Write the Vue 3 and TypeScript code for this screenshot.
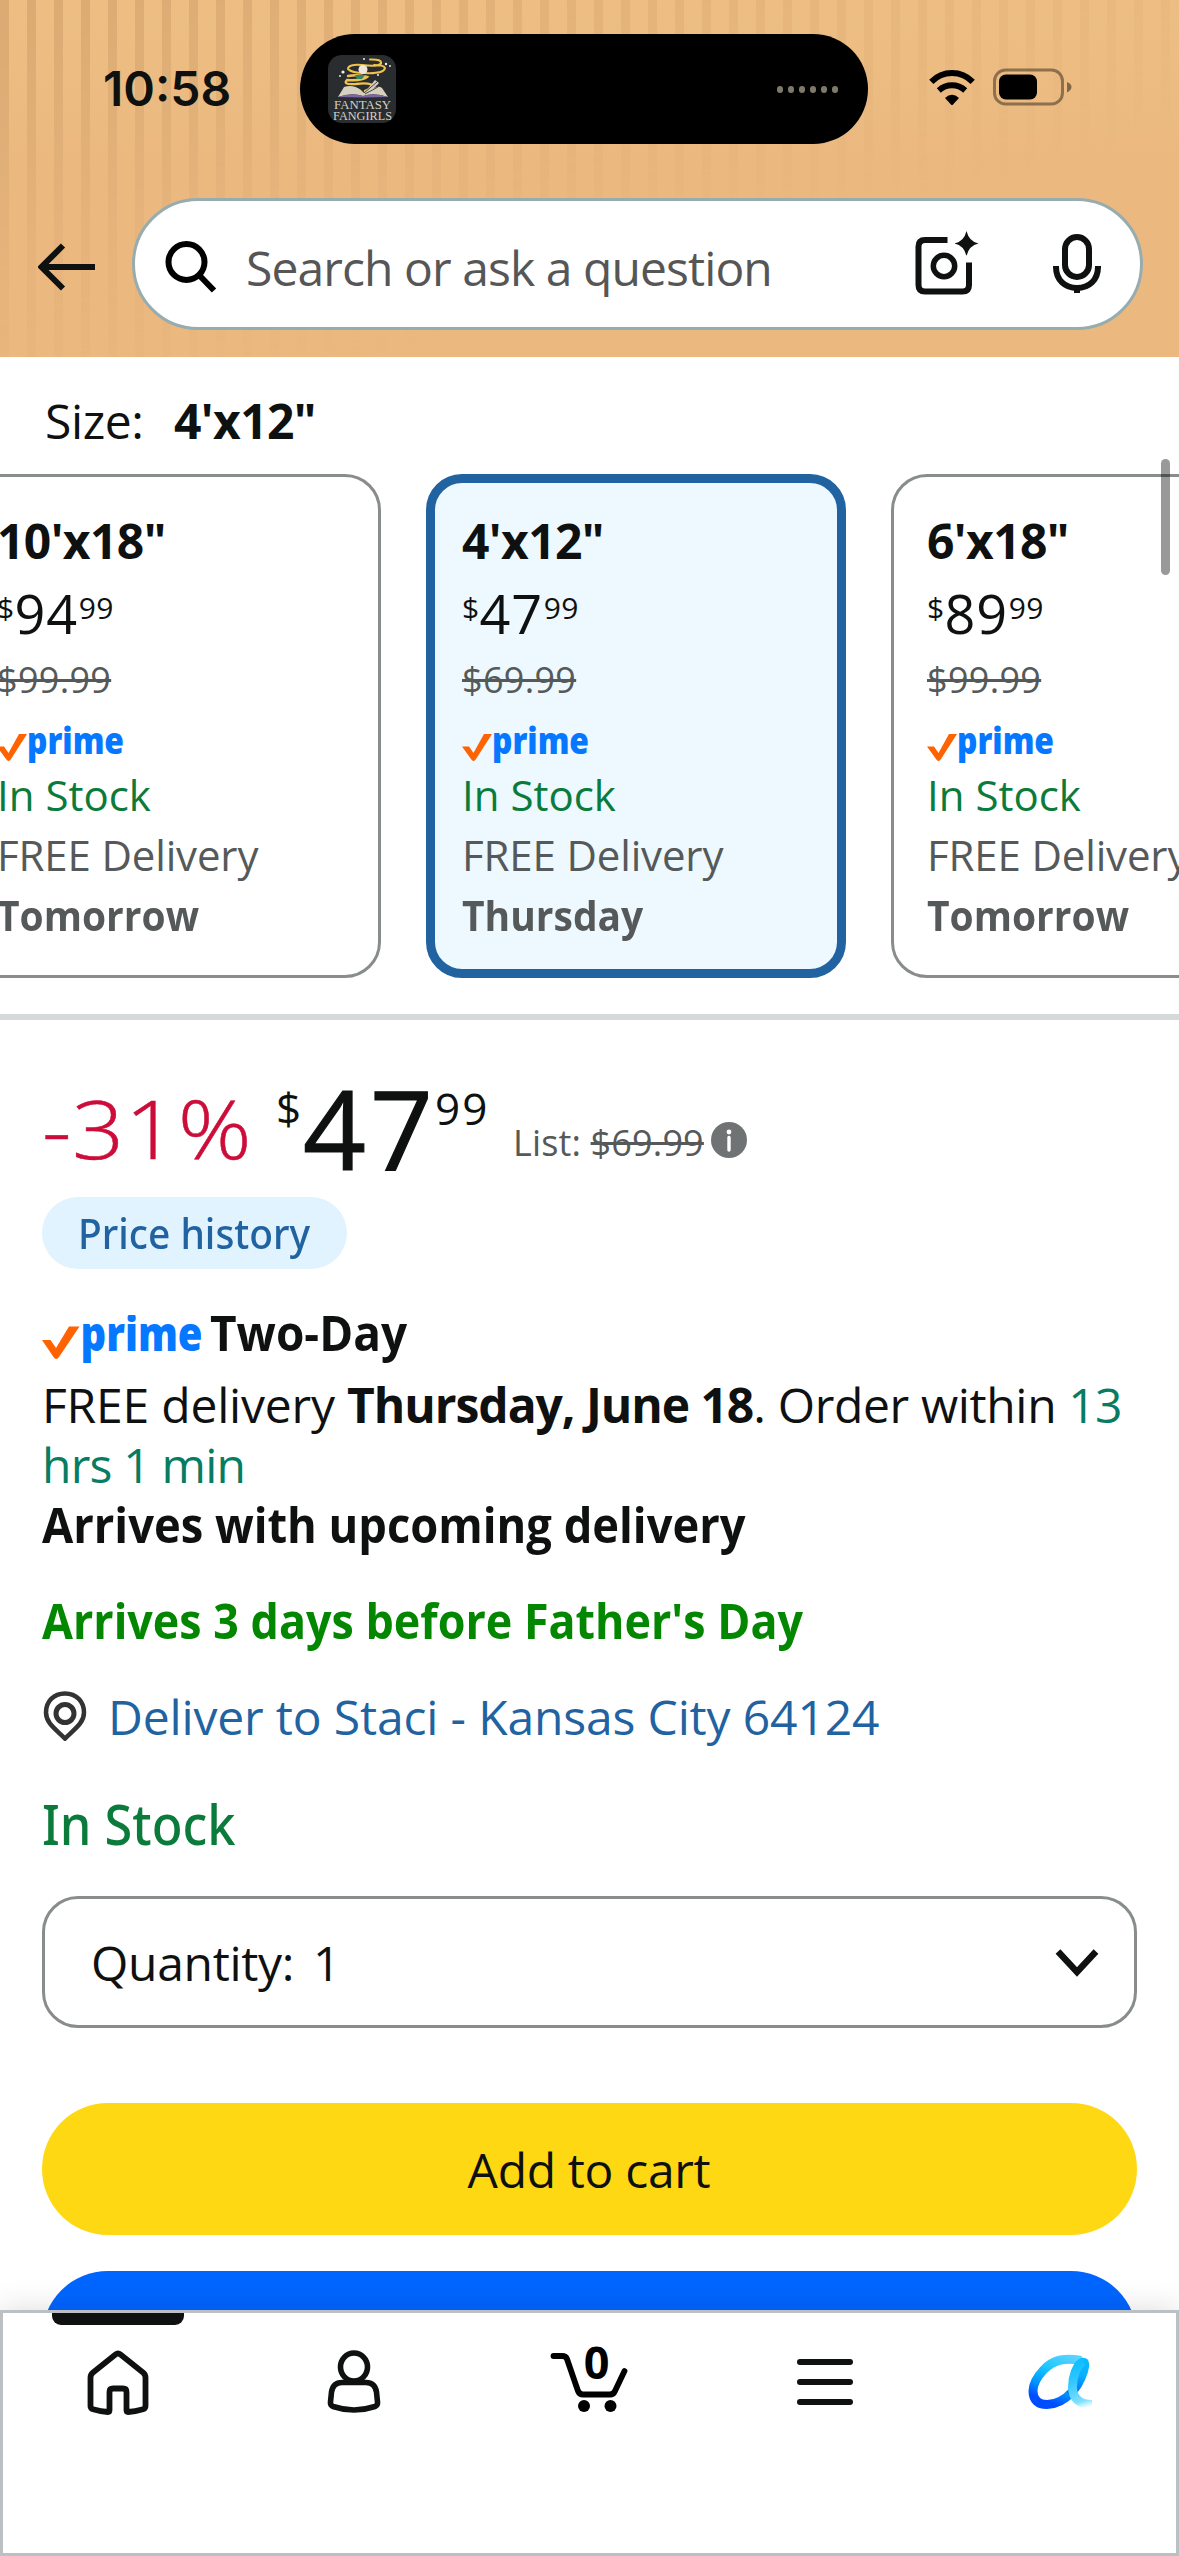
<script setup lang="ts">
interface SizeOption {
  name: string
  dollars: string
  list: string
  day: string
  selected: boolean
}

const options: SizeOption[] = [
  { name: '10\'x18"', dollars: '94', list: '$99.99', day: 'Tomorrow', selected: false },
  { name: '4\'x12"', dollars: '47', list: '$69.99', day: 'Thursday', selected: true },
  { name: '6\'x18"', dollars: '89', list: '$99.99', day: 'Tomorrow', selected: false },
]

const islandDots = [0, 1, 2, 3, 4, 5]
</script>

<template>
  <main class="page">
    <header class="header">
      <div class="stripes"></div>
      <div class="status">
        <span class="clock">10:58</span>
        <div class="island">
          <svg class="artwork" width="68" height="68" viewBox="0 0 68 68">
            <rect width="68" height="68" rx="14" fill="#2a2d2f" />
            <g fill="none" stroke="#efc24e" stroke-linecap="round">
              <path d="M42 4.500Q54 4 53 8.500Q50 12 34 10Q20 9 20 14Q24 18 36 18Q56 19 57 13Q56 10 46 10" stroke-width="2" />
              <path d="M20 21Q30 19 39 22Q34 26 19 25Q14 30 28 29Q42 27 45 31Q42 35 37 36" stroke-width="2.400" />
            </g>
            <circle cx="35" cy="14.500" r="4.500" fill="#efe6dc" />
            <path d="M27 20h10l-3 4h-5z" fill="#2f8a67" />
            <path d="M10 42L16 32Q25 29 33 35L36 38L47 25L51 28L45 34Q50 30 54 33L60 42Q46 37 35 41Q24 37 10 42Z" fill="#d8d0bf" />
            <path d="M36 38L49 27M37 39L50 32" stroke="#4a4740" stroke-width="1" />
            <path d="M10 42Q24 37 35 41Q46 37 60 42L35 42.500Z" fill="#7d65a8" />
            <g fill="#f1f1ee">
              <circle cx="15" cy="17" r="1.600" /><circle cx="58" cy="9" r="1.200" />
              <circle cx="36" cy="4" r="1" /><circle cx="12" cy="21" r=".9" />
              <circle cx="50" cy="20" r="1" /><circle cx="62" cy="11" r=".9" />
            </g>
            <text x="6" y="54" textLength="57" lengthAdjust="spacingAndGlyphs" class="art-text">FANTASY</text>
            <text x="5" y="65" textLength="59" lengthAdjust="spacingAndGlyphs" class="art-text">FANGIRLS</text>
          </svg>
          <div class="dots"><i v-for="d in islandDots" :key="d"></i></div>
        </div>
        <svg class="wifi" width="48" height="36" viewBox="0 0 48 36">
          <path d="M3.300 11.800Q12 3 24 3T44.700 11.800" fill="none" stroke="#000" stroke-width="6" />
          <path d="M10.800 20.500Q16.500 15.300 24 15.300T37.200 20.500" fill="none" stroke="#000" stroke-width="6" />
          <path d="M17 28Q24 21.500 31 28L24.800 34.700Q24 35.400 23.200 34.700Z" />
        </svg>
        <svg class="battery" width="79" height="38" viewBox="0 0 79 38">
          <rect x="1.500" y="2" width="68" height="34" rx="11" fill="none" stroke="#000" stroke-opacity=".4" stroke-width="3" />
          <rect x="6" y="6.500" width="38" height="25" rx="7" />
          <path d="M74 14Q78.500 16 78.500 19T74 24.500Z" fill-opacity=".45" />
        </svg>
      </div>
      <div class="search-row">
        <svg class="back" width="57" height="48" viewBox="0 0 57 48">
          <path d="M57 24H4M25 2.500L3.500 24L25 45.500" fill="none" stroke="#0f1111" stroke-width="6" />
        </svg>
        <div class="search">
          <svg class="glass" width="54" height="54" viewBox="0 0 54 54">
            <circle cx="22.500" cy="23" r="18" fill="none" stroke="#000" stroke-width="6" />
            <path d="M35.500 36.500L50 51.500" stroke="#000" stroke-width="6" />
          </svg>
          <span class="placeholder">Search or ask a question</span>
          <svg class="camera" width="64" height="64" viewBox="0 0 64 64">
            <path d="M32.500 9H10Q3.500 9 3.500 15.500V54Q3.500 60.500 10 60.500H47.500Q54 60.500 54 54V31.500" fill="none" stroke="#0f1111" stroke-width="6" />
            <circle cx="29" cy="35" r="10.700" fill="none" stroke="#0f1111" stroke-width="5.500" />
            <path d="M51.500 0Q54 10.500 63.500 12.500Q54 14.500 51.500 25Q49 14.500 39.500 12.500Q49 10.500 51.500 0Z" fill="#0f1111" />
          </svg>
          <svg class="mic" width="48" height="60" viewBox="0 0 48 60">
            <rect x="12" y="3" width="24" height="40" rx="12" fill="none" stroke="#0f1111" stroke-width="6" />
            <path d="M3 32V33C3 46 12 54 24 54S45 46 45 33V32M24 53V59" fill="none" stroke="#0f1111" stroke-width="6" />
          </svg>
        </div>
      </div>
    </header>

    <section class="sizes">
      <div class="size-label"><span>Size:</span><b>4'x12"</b></div>
      <div class="cards">
        <article v-for="o in options" :key="o.name" class="card" :class="{ selected: o.selected }">
          <b class="card-name">{{ o.name }}</b>
          <div class="card-price"><sup>$</sup><span>{{ o.dollars }}</span><sup>99</sup></div>
          <div class="card-list"><s>{{ o.list }}</s></div>
          <svg class="card-prime" width="130" height="40" viewBox="0 0 130 40">
            <path d="M0 22.500H7L11.500 29L22 10H30L14 35Q11.500 39 9 35Z" fill="#ff6200" />
            <text x="30" y="30" textLength="97" lengthAdjust="spacingAndGlyphs" class="prime-word">prime</text>
          </svg>
          <div class="card-stock">In Stock</div>
          <div class="card-ship">FREE Delivery</div>
          <b class="card-day">{{ o.day }}</b>
        </article>
      </div>
    </section>

    <section class="offer">
      <div class="price">
        <span class="percent">-31%</span>
        <span class="symbol">$</span>
        <span class="whole">47</span>
        <span class="cents">99</span>
        <span class="list">List: <s>$69.99</s></span>
        <svg class="info" width="36" height="36" viewBox="0 0 36 36">
          <circle cx="18" cy="18" r="18" fill="#6f7373" />
          <circle cx="18" cy="10" r="2.400" fill="#fff" />
          <path d="M18 15.500V28" stroke="#fff" stroke-width="3.400" stroke-linecap="round" />
        </svg>
      </div>
      <div class="history"><span>Price history</span></div>
      <div class="two-day">
        <svg width="162" height="50" viewBox="0 0 162 50">
          <path d="M0 25H8.500L14 33L27 11.500H37.500L17 42Q14 46 11.500 42Z" fill="#ff6200" />
          <text x="38.500" y="36" textLength="122" lengthAdjust="spacingAndGlyphs" class="prime-word big">prime</text>
        </svg>
        <b>Two-Day</b>
      </div>
      <p class="delivery"><span class="free">FREE delivery </span><b>Thursday, June 18</b>. Order within <span class="time">13<br />hrs 1 min</span></p>
      <b class="upcoming">Arrives with upcoming delivery</b>
      <b class="fathers">Arrives 3 days before Father's Day</b>
      <div class="deliver-to">
        <svg width="44" height="50" viewBox="0 0 44 50">
          <path d="M22 2.500C33.500 2.500 41 10.500 41 21.500C41 31.500 33 37 22 47.500C11 37 3 31.500 3 21.500C3 10.500 10.500 2.500 22 2.500Z" fill="none" stroke="#333" stroke-width="4.500" />
          <circle cx="22" cy="22.500" r="9" fill="none" stroke="#333" stroke-width="5" />
        </svg>
        <span>Deliver to Staci - Kansas City 64124</span>
      </div>
      <div class="stock">In Stock</div>
      <div class="quantity">
        <span class="q-label">Quantity:</span><span>1</span>
        <svg width="44" height="30" viewBox="0 0 44 30">
          <path d="M3 3.500L22 24L41 3.500" fill="none" stroke="#0f1111" stroke-width="6.500" />
        </svg>
      </div>
      <div class="button add"><span>Add to cart</span></div>
      <div class="button buy"></div>
    </section>

    <div class="scrollbar"></div>

    <nav class="tabs">
      <div class="tab active">
        <svg width="62" height="66" viewBox="0 0 62 66">
          <path d="M28.500 4.500Q31 2.500 33.500 4.500L56 22.500Q58.500 24.500 58.500 27.500V56Q58.500 58.500 56 59.200Q48 61.500 41 62Q39.500 62 39.500 60V42Q39.500 38.500 36 38.500H26Q22.500 38.500 22.500 42V60Q22.500 62 21 62Q14 61.500 6 59.200Q3.500 58.500 3.500 56V27.500Q3.500 24.500 6 22.500Z" fill="none" stroke="#0f1111" stroke-width="5.800" stroke-linejoin="round" />
        </svg>
      </div>
      <div class="tab">
        <svg width="62" height="66" viewBox="0 0 62 66">
          <ellipse cx="31" cy="17" rx="13.500" ry="14" fill="none" stroke="#0f1111" stroke-width="5.600" />
          <path d="M19 32.500H43Q52 32.500 53.500 42L54.500 52Q54.800 55 52 56.500Q31 63.500 10 56.500Q7.200 55 7.500 52L8.500 42Q10 32.500 19 32.500Z" fill="none" stroke="#0f1111" stroke-width="5.600" />
        </svg>
      </div>
      <div class="tab">
        <svg class="cart" width="80" height="76" viewBox="0 0 80 76">
          <path d="M4.500 10H13Q17 10 18 13L29 45Q30.500 48.500 34 48.500H61Q64.500 48.500 66 45L75.500 25" fill="none" stroke="#000" stroke-width="5.800" stroke-linecap="round" stroke-linejoin="round" />
          <circle cx="35" cy="60" r="6" /><circle cx="61.500" cy="60" r="6" />
          <text x="47.500" y="32.500" text-anchor="middle" class="cart-count">0</text>
        </svg>
      </div>
      <div class="tab">
        <svg width="56" height="66" viewBox="0 0 56 66">
          <path d="M3 12H53M3 32H53M3 52H53" stroke="#0f1111" stroke-width="6" stroke-linecap="round" />
        </svg>
      </div>
      <div class="tab">
        <svg width="70" height="66" viewBox="0 0 70 66">
          <defs>
            <linearGradient id="bowl" gradientUnits="userSpaceOnUse" x1="46" y1="6" x2="26" y2="58">
              <stop offset="0" stop-color="#5bd3ff" /><stop offset=".35" stop-color="#1cc8ff" />
              <stop offset=".65" stop-color="#0098ff" /><stop offset=".92" stop-color="#004cff" />
            </linearGradient>
            <linearGradient id="loop" gradientUnits="userSpaceOnUse" x1="58" y1="8" x2="46" y2="50">
              <stop offset="0" stop-color="#08bcff" /><stop offset=".4" stop-color="#08b0ff" /><stop offset="1" stop-color="#0052ff" />
            </linearGradient>
            <linearGradient id="tail" gradientUnits="userSpaceOnUse" x1="52" y1="8" x2="66" y2="56">
              <stop offset="0" stop-color="#08bcff" /><stop offset=".45" stop-color="#35c8ff" />
              <stop offset=".85" stop-color="#7fe0ff" /><stop offset="1" stop-color="#7fe0ff" stop-opacity="0" />
            </linearGradient>
          </defs>
          <path d="M55 10.500C40 7.500 28 9 17.500 20C10 28 7 34 7 41C7 50 12 54.500 21 54.500C30 54.500 39 49.500 46 42" fill="none" stroke="url(#bowl)" stroke-width="9" />
          <path d="M43.500 45C51 38 55 30 57.500 22C59.500 15 59.500 12 57 12" fill="none" stroke="url(#loop)" stroke-width="8.500" />
          <path d="M58 11.500C50 14 46.500 28 46.500 37C46.500 48 53 54.500 66 54.500" fill="none" stroke="url(#tail)" stroke-width="9" />
        </svg>
      </div>
    </nav>
  </main>
</template>

<style>
body { background: #fff; }
</style>

<style scoped>
.page { position: relative; width: 1179px; height: 2556px; overflow: hidden; background: #fff; color: #0f1111; font-family: 'Open Sans', 'Noto Sans', sans-serif; font-size: 48px; line-height: 60px; }
.page * { box-sizing: border-box; }
b { display: block; font-weight: 700; white-space: nowrap; transform-origin: 0 50%; }
svg { display: block; flex: none; }
s { text-decoration-thickness: 3px; }

.header { position: relative; height: 357px; background: linear-gradient(#edbe83, #ebb980 45%, #ebb980); }
.stripes { position: absolute; inset: 0; background: repeating-linear-gradient(90deg, #ce9d69 0 9px, transparent 9px 27px); opacity: .6; -webkit-mask-image: linear-gradient(164deg, #000 0%, rgba(0, 0, 0, .36) 36%, transparent 68%); mask-image: linear-gradient(164deg, #000 0%, rgba(0, 0, 0, .36) 36%, transparent 68%); }
.status { position: relative; display: flex; height: 198px; align-items: flex-start; }
.clock { width: 197px; margin: 59px 0 0 103px; font: 600 48px/60px Inter, sans-serif; white-space: nowrap; }
.island { display: flex; width: 568px; height: 110px; margin-top: 34px; padding: 0 30px 0 28px; align-items: center; justify-content: space-between; border-radius: 55px; background: #000; }
.art-text { font: 13px 'Liberation Serif', serif; fill: #d5d2c9; }
.dots { display: flex; gap: 5px; }
.dots i { width: 6px; height: 7px; border-radius: 3px; background: #7e796a; }
.wifi { margin: 70px 0 0 60px; }
.battery { margin: 68px 0 0 17px; }
.search-row { position: relative; display: flex; align-items: center; height: 132px; padding-left: 38px; }
.back { margin-top: 6px; }
.search { display: flex; align-items: center; width: 1011px; height: 132px; margin-left: 37px; border: 3px solid #97acaf; border-radius: 66px; background: #fff; }
.glass { margin: 3px 0 0 29px; }
.placeholder { margin: 8px 0 0 28px; width: 667px; font-size: 48px; letter-spacing: -.92px; color: #565656; white-space: nowrap; }
.camera { margin: -3px 0 0 2px; }
.mic { margin: 0 0 0 74px; }

.sizes { padding-top: 34px; height: 663px; border-bottom: 6px solid #d5d9d9; overflow: hidden; }
.size-label { display: flex; padding-left: 45px; height: 60px; }
.size-label span { width: 129px; letter-spacing: -.4px; }
.size-label b, .card-name { letter-spacing: -.6px; }
.cards { display: flex; gap: 45px; margin: 23px 0 0 -39px; }
.card { flex: none; width: 420px; height: 504px; padding: 34px 0 0 33px; border: 3px solid #888c8c; border-radius: 36px; background: #fff; }
.card.selected { padding: 28px 0 0 27px; border: 9px solid #2162a1; background: #edf8ff; }
.card-price { display: flex; align-items: flex-start; height: 72px; margin-top: 6px; font-size: 54px; line-height: 72px; }
.card-price span { margin-right: 1px; letter-spacing: .8px; }
.card-price sup { margin-top: 10px; font-size: 30px; line-height: 41px; vertical-align: baseline; letter-spacing: .3px; }
.card-list { height: 49px; margin-top: 6px; font-size: 36px; line-height: 49px; letter-spacing: .3px; color: #565959; }
.card-prime { margin: 20px 0 1px; }
.prime-word { font: 800 37px 'Open Sans', 'Noto Sans', sans-serif; fill: #0578ff; }
.prime-word.big { font-size: 47px; }
.card-stock, .card-ship, .card-day { font-size: 42px; line-height: 60px; white-space: nowrap; }
.card-stock { color: #0b7b3c; }
.card-ship, .card-day { color: #565959; }
.card-ship { letter-spacing: -.15px; }
.card-day { transform: scaleX(.928); }

.offer { padding: 32px 42px 0; }
.price { display: flex; align-items: flex-start; height: 145px; white-space: nowrap; }
.percent { width: 234px; margin-top: 20px; font-size: 81px; font-weight: 300; line-height: 111px; letter-spacing: .5px; color: #cc0c39; -webkit-text-stroke: .5px #cc0c39; transform: scaleX(1.13); transform-origin: 0 50%; }
.symbol { width: 27px; margin-top: 26px; font-size: 44px; }
.whole { width: 132px; font-size: 110px; line-height: 150px; letter-spacing: 4px; -webkit-text-stroke: 1.200px #0f1111; }
.cents { width: 78px; margin-top: 26px; font-size: 44px; letter-spacing: 2px; }
.list { margin-top: 66px; font-size: 36px; line-height: 49px; letter-spacing: .15px; color: #565959; }
.info { margin: 70px 0 0 7px; }
.history { width: 305px; height: 72px; padding: 6px 0 0 36px; border-radius: 36px; background: #e0f3ff; color: #2162a1; }
.history span { display: block; width: 260px; font: 500 42px/60px 'Noto Sans', sans-serif; white-space: nowrap; transform: scaleX(.928); transform-origin: 0 50%; }
.two-day { display: flex; height: 60px; margin-top: 34px; }
.two-day svg { margin: 12px 0 0; }
.two-day b { margin-left: 6px; transform: scaleX(.957); }
.delivery { margin: 12px 0 0; white-space: nowrap; letter-spacing: -.35px; }
.delivery b { display: inline; letter-spacing: -1.050px; }
.free { letter-spacing: -.2px; }
.time { color: #067d62; letter-spacing: -.8px; }
.upcoming { transform: scaleX(.943); }
.fathers { margin-top: 36px; color: #038700; transform: scaleX(.934); }
.deliver-to { display: flex; height: 60px; margin-top: 36px; color: #2162a1; }
.deliver-to svg { margin: 4px 0 0 1px; }
.deliver-to span { margin-left: 21px; letter-spacing: -.15px; white-space: nowrap; }
.stock { margin-top: 37px; font: 500 57px/78px 'Noto Sans', sans-serif; color: #0b7b3c; transform: scaleX(.885); transform-origin: 0 50%; }
.quantity { display: flex; align-items: center; height: 132px; margin-top: 34px; padding: 2px 35px 0 46px; border: 3px solid #888c8c; border-radius: 36px; }
.q-label { width: 222px; letter-spacing: -.3px; }
.quantity svg { margin-left: auto; }
.button { display: flex; align-items: center; justify-content: center; height: 132px; border-radius: 66px; }
.button.add { margin-top: 75px; padding: 2px 1px 0 0; background: #ffd814; letter-spacing: -.33px; }
.button.buy { margin-top: 36px; background: #0065ff; }

.scrollbar { position: absolute; top: 459px; left: 1161px; width: 9px; height: 116px; border-radius: 5px; background: rgba(0, 0, 0, .4); }
.tabs { position: absolute; left: 0; right: 0; bottom: 0; display: flex; height: 246px; border: 3px solid #bac0c3; background: #fff; box-shadow: 0 0 30px rgba(15, 17, 17, .14); }
.tab { position: relative; flex: 1; display: flex; justify-content: center; align-items: flex-start; padding-top: 37px; }
.tab:first-child { margin-left: -3px; }
.tab:last-child { margin-right: -3px; }
.tab.active::before { content: ''; position: absolute; top: 0; left: 52px; width: 132px; height: 12px; border-radius: 0 0 9px 9px; background: #0f1111; }
.cart { margin-top: -4px; }
.cart-count { font: 700 45px 'Open Sans', 'Noto Sans', sans-serif; }
</style>
